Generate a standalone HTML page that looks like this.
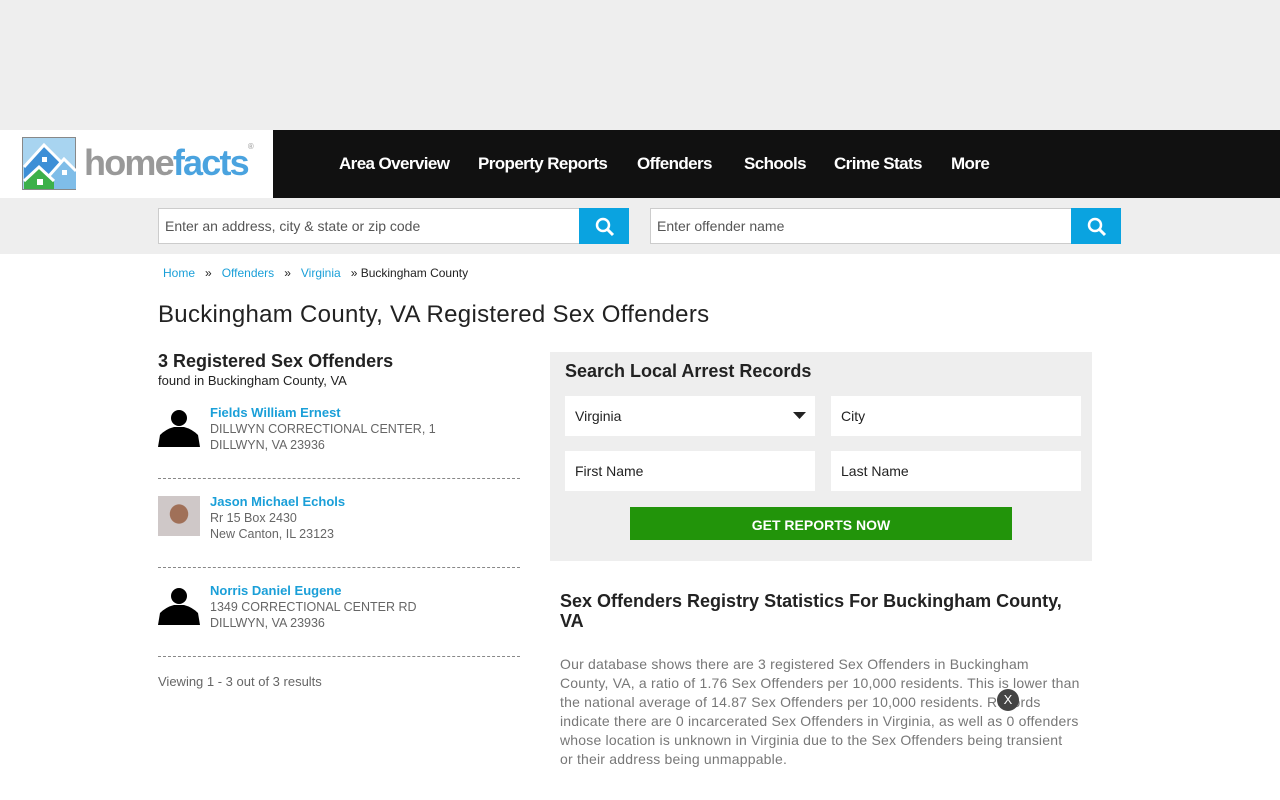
<!DOCTYPE html>
<html><head><meta charset="utf-8"><style>
*{box-sizing:border-box;margin:0;padding:0}
body{width:1280px;height:800px;overflow:hidden;background:#fff;font-family:"Liberation Sans",sans-serif;color:#222;position:relative}
.abs{position:absolute}
a{color:#1a9fd8;text-decoration:none}
.inp{position:absolute;height:36px;background:#fff;border:1px solid #ccc;font-size:14px;color:#555;padding:9px 6px}
.btn{position:absolute;height:36px;width:50px;background:#0aa3e0}
.nav span{position:absolute;top:24px;color:#fff;font-weight:bold;font-size:17px;letter-spacing:-0.6px}
.f{position:absolute;background:#fff;height:40px;width:250px;font-size:14px;padding:12px 10px;color:#222}
.off{position:absolute;left:158px;width:362px;font-size:12.5px;color:#666;line-height:16px}
.off .n{color:#1a9fd8;font-weight:bold;font-size:13px}
.off .p{position:absolute;left:0;top:2px;width:42px;height:40px}
.off .t{margin-left:52px}
.sep{position:absolute;left:158px;width:362px;border-top:1px dashed #888}
</style></head><body>
<div class="abs" style="left:0;top:0;width:1280px;height:130px;background:#eee"></div>
<div class="abs" style="left:0;top:130px;width:273px;height:68px;background:#fff"></div>
<svg class="abs" style="left:22px;top:137px" width="54" height="53" viewBox="0 0 54 53">
<rect x="0.5" y="0.5" width="53" height="52" fill="#a8d4f0" stroke="#888"/>
<path d="M2 30 L22 8 L40 26 L40 52 L2 52Z" fill="#3d8fd6"/>
<path d="M2 30 L22 8 L40 26" fill="none" stroke="#fff" stroke-width="3"/>
<path d="M28 38 L42 22 L54 34 L54 52 L28 52Z" fill="#7fbde8"/>
<path d="M26 40 L42 22 L54 34" fill="none" stroke="#fff" stroke-width="3"/>
<path d="M2 52 L2 44 L17 30 L32 44 L32 52Z" fill="#3cb04a"/>
<path d="M2 44 L17 30 L32 44" fill="none" stroke="#fff" stroke-width="3"/>
<rect x="15" y="42" width="6" height="6" fill="#fff"/><rect x="20" y="20" width="5" height="5" fill="#fff"/><rect x="40" y="33" width="5" height="5" fill="#fff"/>
</svg>
<div class="abs" style="left:84px;top:142px;font-size:36px;font-weight:bold;letter-spacing:-1.8px"><span style="color:#999">home</span><span style="color:#4aa3df">facts</span><span style="color:#aaa;font-size:8px;vertical-align:top">®</span></div>
<div class="abs nav" style="left:273px;top:130px;width:1007px;height:68px;background:#111">
<span style="left:66px">Area Overview</span><span style="left:205px">Property Reports</span><span style="left:364px">Offenders</span><span style="left:471px">Schools</span><span style="left:561px">Crime Stats</span><span style="left:678px">More</span></div>
<div class="abs" style="left:0;top:198px;width:1280px;height:56px;background:#eee"></div>
<div class="inp" style="left:158px;top:208px;width:422px">Enter an address, city &amp; state or zip code</div>
<div class="btn" style="left:579px;top:208px"></div>
<div class="inp" style="left:650px;top:208px;width:422px">Enter offender name</div>
<div class="btn" style="left:1071px;top:208px"></div>
<svg class="abs" style="left:595px;top:217px" width="20" height="20" viewBox="0 0 20 20"><circle cx="8" cy="8" r="6" fill="none" stroke="#fff" stroke-width="2.5"/><path d="M12.5 12.5 L18 18" stroke="#fff" stroke-width="3"/></svg>
<svg class="abs" style="left:1087px;top:217px" width="20" height="20" viewBox="0 0 20 20"><circle cx="8" cy="8" r="6" fill="none" stroke="#fff" stroke-width="2.5"/><path d="M12.5 12.5 L18 18" stroke="#fff" stroke-width="3"/></svg>
<div class="abs" style="left:163px;top:266px;font-size:12px;color:#222"><a>Home</a> &nbsp; » &nbsp; <a>Offenders</a> &nbsp; » &nbsp; <a>Virginia</a> &nbsp; » Buckingham County</div>
<div class="abs" style="left:158px;top:301px;font-size:24px;color:#222;letter-spacing:0.3px">Buckingham County, VA Registered Sex Offenders</div>
<div class="abs" style="left:158px;top:351px;font-size:18px;font-weight:bold">3 Registered Sex Offenders</div>
<div class="abs" style="left:158px;top:373px;font-size:13px">found in Buckingham County, VA</div>
<div class="off" style="top:405px"><svg class="p" viewBox="0 0 42 40"><circle cx="21" cy="11" r="8"/><path d="M0 40 L2 28 Q8 22 16 20 L26 20 Q34 22 40 28 L42 40Z"/></svg><div class="t"><span class="n">Fields William Ernest</span><br>DILLWYN CORRECTIONAL CENTER, 1<br>DILLWYN, VA 23936</div></div>
<div class="sep" style="top:478px"></div>
<div class="off" style="top:494px"><div class="p" style="background:radial-gradient(ellipse at 50% 45%,#a07058 30%,#cfc8c8 32%)"></div><div class="t"><span class="n">Jason Michael Echols</span><br>Rr 15 Box 2430<br>New Canton, IL 23123</div></div>
<div class="sep" style="top:567px"></div>
<div class="off" style="top:583px"><svg class="p" viewBox="0 0 42 40"><circle cx="21" cy="11" r="8"/><path d="M0 40 L2 28 Q8 22 16 20 L26 20 Q34 22 40 28 L42 40Z"/></svg><div class="t"><span class="n">Norris Daniel Eugene</span><br>1349 CORRECTIONAL CENTER RD<br>DILLWYN, VA 23936</div></div>
<div class="sep" style="top:656px"></div>
<div class="abs" style="left:158px;top:674px;font-size:13px;color:#666">Viewing 1 - 3 out of 3 results</div>
<div class="abs" style="left:550px;top:352px;width:542px;height:209px;background:#eee"></div>
<div class="abs" style="left:565px;top:361px;font-size:18px;font-weight:bold">Search Local Arrest Records</div>
<div class="f" style="left:565px;top:396px">Virginia</div>
<svg class="abs" style="left:793px;top:412px" width="13" height="8"><path d="M0 0 H13 L6.5 7Z" fill="#222"/></svg>
<div class="f" style="left:831px;top:396px">City</div>
<div class="f" style="left:565px;top:451px">First Name</div>
<div class="f" style="left:831px;top:451px">Last Name</div>
<div class="abs" style="left:630px;top:507px;width:382px;height:33px;background:#22940a;color:#fff;font-weight:bold;font-size:14px;text-align:center;line-height:36px">GET REPORTS NOW</div>
<div class="abs" style="left:560px;top:591px;width:520px;font-size:18px;font-weight:bold;line-height:20px">Sex Offenders Registry Statistics For Buckingham County, VA</div>
<div class="abs" style="left:560px;top:655px;white-space:nowrap;font-size:14px;color:#777;line-height:19px;letter-spacing:0.2px">Our database shows there are 3 registered Sex Offenders in Buckingham<br>County, VA, a ratio of 1.76 Sex Offenders per 10,000 residents. This is lower than<br>the national average of 14.87 Sex Offenders per 10,000 residents. Records<br>indicate there are 0 incarcerated Sex Offenders in Virginia, as well as 0 offenders<br>whose location is unknown in Virginia due to the Sex Offenders being transient<br>or their address being unmappable.</div>
<div class="abs" style="left:997px;top:689px;width:22px;height:22px;border-radius:50%;background:#444;color:#fff;font-size:13px;text-align:center;line-height:22px">X</div>
</body></html>
